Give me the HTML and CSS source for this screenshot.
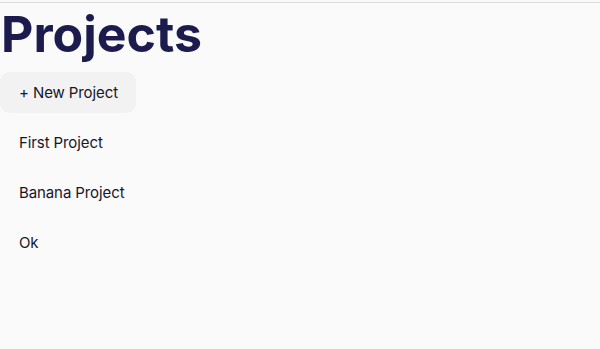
FILE: index.html
```html
<!DOCTYPE html>
<html>
<head>
<meta charset="utf-8">
<link rel="stylesheet" href="styles.css">
</head>
<body>
<div class="page">
  <h1 class="title">Projects</h1>
  <ul class="list">
    <li><button class="item new">+ New Project</button></li>
    <li><a class="item">First Project</a></li>
    <li><a class="item">Banana Project</a></li>
    <li><a class="item">Ok</a></li>
  </ul>
</div>
</body>
</html>
```
FILE: styles.css
```css
html, body {
  margin: 0;
  padding: 0;
  background: #fafafa;
}
body {
  font-family: Inter, "Noto Sans", sans-serif;
  color: #1a1a2e;
}
.page {
  margin-top: 2px;
  border-top: 1px solid #dcdcdc;
}
.title {
  margin: 0;
  padding-left: 1px;
  font-size: 50px;
  font-weight: 700;
  line-height: 62px;
  color: #1c1b4d;
}
.list {
  list-style: none;
  margin: 7px 0 0 0;
  padding: 0;
  display: flex;
  flex-direction: column;
  align-items: flex-start;
  gap: 9px;
}
.item {
  display: block;
  font-family: Inter, "Noto Sans", sans-serif;
  font-size: 15px;
  line-height: 21px;
  padding: 10px 18px 10px 19px;
  color: #16162a;
  border: none;
  background: transparent;
  border-radius: 10px;
  letter-spacing: -0.1px;
}
.new {
  background: #f2f2f2;
}
```
